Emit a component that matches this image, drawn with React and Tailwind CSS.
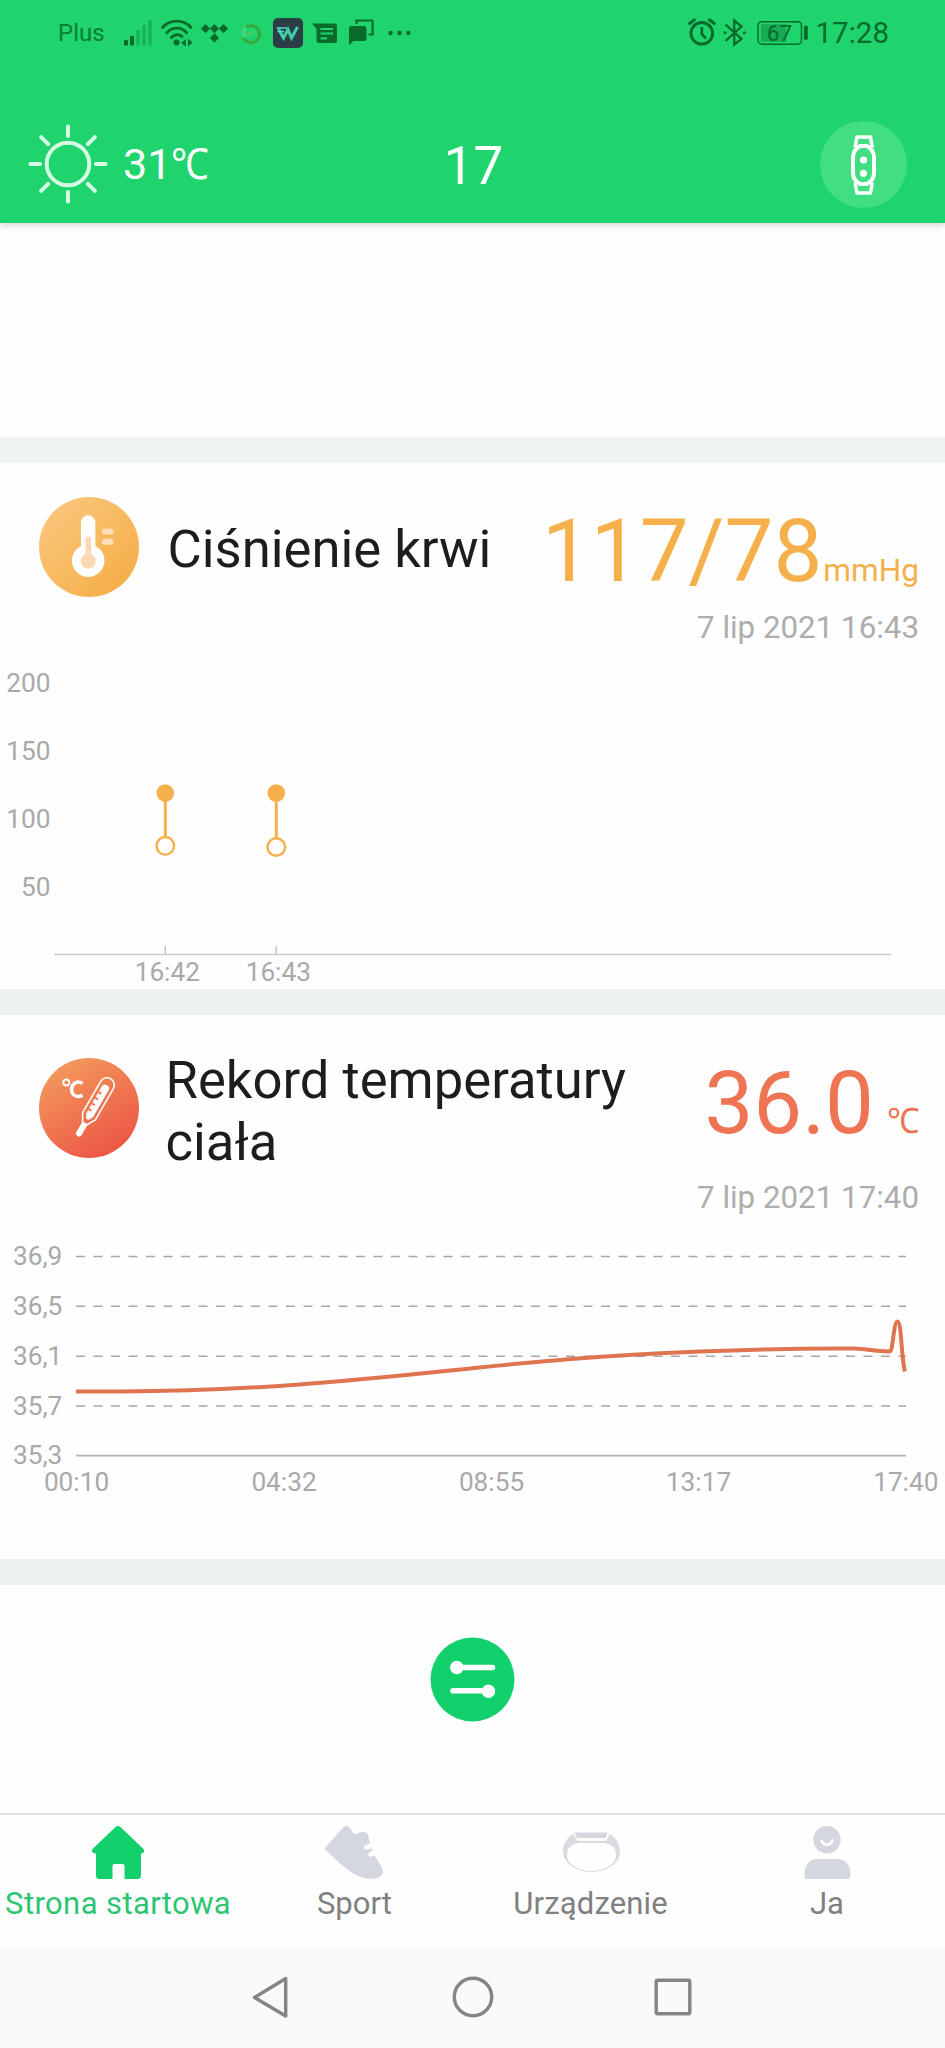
import React from "react";

const ORANGE = "#f5b04c";
const DARK = "#0a6a2c";

function StatusIcons() {
  return (
    <svg width="296" height="34" viewBox="120 16 296 34" fill={DARK}>
      <rect x="124" y="40" width="4" height="5.5" rx="1" />
      <rect x="130" y="36" width="4" height="9.5" rx="1" />
      <g fillOpacity="0.32">
        <rect x="136.300" y="30" width="3.400" height="15.500" rx="1" />
        <rect x="142.300" y="25" width="3.400" height="20.500" rx="1" />
        <rect x="148.300" y="20" width="3.400" height="25.500" rx="1" />
      </g>
      <g fill="none" stroke={DARK} strokeWidth="2.800" strokeLinecap="round">
        <path d="M162.500 27.500C170 19 183.500 19 191 27.500" />
        <path d="M166.800 32.800C172 26.500 181.500 26.500 186.800 32.800" />
        <path d="M171.200 37.500C174.500 34 179 34 182 36.500" />
      </g>
      <circle cx="176.500" cy="42.600" r="3" />
      <path d="M181 43L186 39V46.500zM192.500 42.500L188 38.500V46.500z" />
      <path d="M205.500 24l4.600 4.600-4.600 4.600-4.600-4.600zM214.500 24l4.600 4.600-4.600 4.600-4.600-4.600zM223.500 24l4.600 4.600-4.600 4.600-4.600-4.600zM214.500 33.300l4.600 4.600-4.600 4.600-4.600-4.600z" />
      <g fill="none" strokeLinecap="round">
        <path d="M247.500 26.500A8.500 8.500 0 1 1 243.500 38" stroke="#35ab3c" strokeWidth="3.200" />
        <path d="M244.500 36.500A9 9 0 0 1 245 28" stroke="#4fd487" strokeWidth="3" />
        <path d="M247 34.500L253 32" stroke="#63c95a" strokeWidth="2" />
      </g>
      <rect x="273" y="18" width="30" height="30" rx="5" fill="#2d3d46" />
      <g fill="none" stroke="#3fd0a4" strokeWidth="3">
        <path d="M278.500 29L283.500 38L288 29.500L291.500 38L297.500 27" />
        <path d="M276.500 28H287M277.500 31.500H284" strokeWidth="1.600" stroke="#51d6d0" />
      </g>
      <path d="M312 23.500H334.500Q337 23.500 337 26V40.500Q337 43 334.500 43H319Q316.500 43 316.500 40.500V29z" />
      <path d="M320.500 29H333M320.500 33.500H333M320.500 38.300H327" stroke="#1fd46d" strokeWidth="2.200" />
      <path d="M351 26H364Q366.500 26 366.500 28.500V38.500Q366.500 41 364 41H353.500L349 45V28.500Q349 26 351 26z" />
      <path d="M356.500 24V20.500H371.500Q372.600 20.500 372.600 21.600V34.500H368.500" fill="none" stroke={DARK} strokeWidth="2.200" />
      <circle cx="390.500" cy="33" r="2.200" />
      <circle cx="399.500" cy="33" r="2.200" />
      <circle cx="408.300" cy="33" r="2.200" />
    </svg>
  );
}

function SystemIcons() {
  return (
    <svg width="122" height="34" viewBox="686 16 122 34" fill="none" stroke={DARK}>
      <circle cx="700.800" cy="33.300" r="10.800" strokeWidth="3" />
      <path d="M700.800 27V34L705 38.500" strokeWidth="2.600" />
      <path d="M688.500 23.500L693.500 19.800M713.300 23.500L708.300 19.800" strokeWidth="3" strokeLinecap="round" />
      <path d="M724.500 24.500L740.500 39L733.300 44.500V20.500L740.500 26.500L724.500 41" strokeWidth="2.300" />
      <circle cx="724" cy="32.700" r="1.500" fill={DARK} stroke="none" />
      <circle cx="743.300" cy="32.700" r="1.500" fill={DARK} stroke="none" />
      <rect x="757" y="21.700" width="43.500" height="22.500" rx="4" strokeWidth="1.500" />
      <rect x="760" y="24.300" width="25" height="17.400" fill={DARK} fillOpacity="0.38" stroke="none" />
      <rect x="803" y="25.500" width="3.800" height="14.500" rx="1.800" fill={DARK} stroke="none" />
      <text x="778.500" y="40.600" textAnchor="middle" fontSize="22.500" fill={DARK} stroke="none">67</text>
    </svg>
  );
}

function Sun() {
  const rays = [0, 45, 90, 135, 180, 225, 270, 315];
  return (
    <svg width="80" height="80" viewBox="-40 -40 80 80" stroke="#d6fbe3" strokeWidth="4" fill="none" strokeLinecap="round">
      <circle r="21.300" />
      {rays.map((a) => (
        <path key={a} d={a % 90 ? "M0 -28V-38" : "M0 -28V-37.500"} transform={`rotate(${a})`} />
      ))}
    </svg>
  );
}

function Band() {
  return (
    <svg width="87" height="87" viewBox="-43.500 -43.500 87 87" fill="none" stroke="#fff">
      <circle r="43.500" fill="#42de82" stroke="none" />
      <path d="M-8.500 -17L-6.500 -27.500H7L8.800 -17M-8.500 18L-6.500 28.500H7L8.800 18" strokeWidth="3.500" strokeLinejoin="round" />
      <path d="M-3.500 -18.500H3.500Q10.500 -14.500 10.500 -7V8Q10.500 16 3.500 19.500H-3.500Q-10.500 16 -10.500 8V-7Q-10.500 -14.500 -3.500 -18.500z" strokeWidth="4" />
      <circle cx="0" cy="-4.500" r="3.600" fill="#fff" stroke="none" />
      <circle cx="0" cy="8.800" r="3.600" fill="#fff" stroke="none" />
    </svg>
  );
}

function PressureIcon() {
  return (
    <svg className="mt-[34.5px] shrink-0" width="100" height="100" viewBox="0 0 100 100">
      <defs>
        <linearGradient id="amber" x1="0" y1="0" x2="1" y2="1">
          <stop offset="0.100" stopColor="#fac67b" />
          <stop offset="0.900" stopColor="#f5ae48" />
        </linearGradient>
      </defs>
      <circle cx="50" cy="50" r="50" fill="url(#amber)" />
      <path d="M42 49V25.500a7.200 7.200 0 0 1 14.400 0V49a16.300 16.300 0 1 1-14.400 0z" fill="#fff" />
      <path d="M46.500 57V42.500a2.800 2.800 0 0 1 5.600 0V57a7.600 7.600 0 1 1-5.600 0z" fill="#fbd9b4" />
      <rect x="63" y="31.500" width="11.500" height="6" rx="3" fill="#fde0b8" />
      <rect x="63" y="41.700" width="11.500" height="6" rx="3" fill="#fde0b8" />
    </svg>
  );
}

function BodyTempIcon() {
  return (
    <svg className="mt-[42.5px] shrink-0" width="100" height="100" viewBox="0 0 100 100">
      <defs>
        <linearGradient id="coral" x1="0.200" y1="0" x2="0.800" y2="1">
          <stop offset="0.050" stopColor="#f3985c" />
          <stop offset="0.950" stopColor="#ec5545" />
        </linearGradient>
      </defs>
      <circle cx="50" cy="50" r="50" fill="url(#coral)" />
      <g fill="none" stroke="#fff">
        <circle cx="27.300" cy="24.500" r="3" strokeWidth="1.800" />
        <path d="M43.500 25.500C39 22 32.500 25.500 32.500 31C32.500 37.500 38.500 40.500 43.500 37" strokeWidth="3.400" />
      </g>
      <g transform="translate(68 27) rotate(30)">
        <path d="M-7.300 0a7.300 7.300 0 0 1 14.600 0V36L2.500 44.500H-2.500L-7.300 36z" fill="none" stroke="#fff" strokeWidth="1.600" />
        <path d="M-3.800 4a3.900 3.900 0 0 1 7.800 0V35L1.500 39.500H-1.500L-3.800 35V31H-0.500V29H-3.800V24.500H-0.500V22.500H-3.800V18H-0.500V16H-3.800V11.500H-0.500V9.500H-3.800z" fill="#fff" />
        <path d="M-3 45H3V56a3 3 0 0 1-6 0z" fill="#fff" />
      </g>
    </svg>
  );
}

function PressureChart() {
  const levels = [[200, 691.7], [150, 760], [100, 828], [50, 896]];
  const readings = [
    { x: 165.300, low: 845.800, label: "16:42" },
    { x: 276.300, low: 847, label: "16:43" },
  ];
  return (
    <svg className="block" width="945" height="336" viewBox="0 653 945 336" fontSize="26.200" fill="#a9a9a9">
      {levels.map(([v, y]) => (
        <text key={v} x="50.500" y={y} textAnchor="end">{v}</text>
      ))}
      <path d="M54 954.500H891.500" stroke="#cbcbcb" strokeWidth="1.600" />
      {readings.map((r) => (
        <g key={r.label}>
          <path d={`M${r.x} 946V954`} stroke="#c4c4c4" strokeWidth="1.500" />
          <path d={`M${r.x} 793V${r.low - 9}`} stroke={ORANGE} strokeWidth="3" />
          <circle cx={r.x} cy="793" r="8.800" fill={ORANGE} />
          <circle cx={r.x} cy={r.low} r="8.800" fill="#fff" stroke={ORANGE} strokeWidth="2.400" />
          <text x={r.x + 2} y="981.300" textAnchor="middle">{r.label}</text>
        </g>
      ))}
    </svg>
  );
}

function TemperatureChart() {
  const levels = [["36,9", 1256.4], ["36,5", 1306.3], ["36,1", 1356.2], ["35,7", 1406]];
  const hours = [["00:10", 76.5], ["04:32", 284], ["08:55", 491.5], ["13:17", 698.5], ["17:40", 905.8]];
  return (
    <svg className="block" width="945" height="334" viewBox="0 1225 945 334" fontSize="26.200" fill="#a9a9a9">
      {levels.map(([v, y]) => (
        <g key={v}>
          <text x="13" y={y + 8.500}>{v}</text>
          <path d={`M76 ${y}H906`} stroke="#a8a8a8" strokeWidth="1.500" strokeDasharray="9 8.500" />
        </g>
      ))}
      <text x="13" y="1464">35,3</text>
      <path d="M76 1455.700H906" stroke="#b0b0b0" strokeWidth="1.800" />
      {hours.map(([h, x]) => (
        <text key={h} x={x} y="1491.300" textAnchor="middle">{h}</text>
      ))}
      <path
        d="M76 1391.500H120C250 1391 350 1381 450 1370.500C540 1361 600 1355.500 700 1351.500C760 1349 820 1348.300 855 1348.500C867 1349 874 1351.500 890 1351.500C893 1351.500 893.500 1321.500 897.500 1321.500C901.500 1321.500 901.500 1361 905 1371.500"
        fill="none"
        stroke="#e07450"
        strokeWidth="4"
        strokeLinejoin="round"
      />
    </svg>
  );
}

function Card({ icon, title, titleClass, value, unit, tone, date, dateClass, headClass, children }) {
  return (
    <section>
      <div className={`flex pl-[39px] pr-[26px] ${headClass}`}>
        {icon}
        <h2 className={`text-[52.6px] leading-[62px] text-[#1d1d1f] whitespace-nowrap ${titleClass}`}>{title}</h2>
        <div className="ml-auto flex flex-col items-end pt-[38px]">
          <div className={`flex items-baseline text-[87px] leading-[100px] ${tone}`}>
            {value}
            {unit}
          </div>
          <time className={`text-[31.3px] leading-[40px] text-[#adadad] ${dateClass}`}>{date}</time>
        </div>
      </div>
      {children}
    </section>
  );
}

function Tab({ label, tone, children }) {
  return (
    <div className={`flex flex-col items-center ${tone}`}>
      <svg className="mt-[11px]" width="60" height="56" viewBox="-30 0 60 56" fill="currentColor">{children}</svg>
      <span className="mt-[2px] text-[31px] leading-[40px] whitespace-nowrap">{label}</span>
    </div>
  );
}

export default function App() {
  return (
    <div className="flex h-[2048px] w-[945px] flex-col overflow-hidden bg-[#fefefe] font-[Roboto,sans-serif]">
      <header className="h-[223px] shrink-0 bg-[#1fd46d] shadow-[0_2px_7px_rgba(0,0,0,0.18)]">
        <div className="flex h-[66px] items-center pl-[58px] pr-[56px] text-[#0d7c36]">
          <span className="w-[62px] text-[24px] leading-[34px]">Plus</span>
          <StatusIcons />
          <div className="ml-auto flex items-center">
            <SystemIcons />
            <span className="ml-[7px] text-[29.5px] leading-[34px] text-[#0a6a2c]">17:28</span>
          </div>
        </div>
        <div className="grid h-[144px] grid-cols-3 items-center pt-[54px] pl-[28px] pr-[38px]">
          <div className="-mt-[2px] flex items-center">
            <Sun />
            <span className="ml-[15px] text-[43px] leading-[50px] text-white">31<span className="inline-block origin-left scale-x-[0.88]">℃</span></span>
          </div>
          <div className="pl-[12px] pt-[2px] text-center text-[53px] leading-[64px] text-white">17</div>
          <div className="-mt-[2px] flex justify-end"><Band /></div>
        </div>
      </header>

      <main className="shrink-0">
        <div className="h-[213.5px]" />
        <div className="h-[26px] bg-[#eef2f3]" />
        <Card
          icon={<PressureIcon />}
          title="Ciśnienie krwi"
          titleClass="ml-[28.5px] mt-[55px]"
          value="117/78"
          unit={<span className="ml-[1px] text-[31.6px] leading-none">mmHg</span>}
          tone="text-[#f5b04c]"
          date="7 lip 2021 16:43"
          dateClass="mt-[7px]"
          headClass="h-[190.5px]"
        >
          <PressureChart />
        </Card>
        <div className="h-[26px] bg-[#eef1f2]" />
        <Card
          icon={<BodyTempIcon />}
          title={<>Rekord temperatury<br />ciała</>}
          titleClass="ml-[26.5px] mt-[33.5px]"
          value="36.0"
          unit={<span className="-mr-[1px] ml-[11px] inline-block origin-right scale-x-[0.93] text-[35px] leading-none">℃</span>}
          tone="text-[#ee7453]"
          date="7 lip 2021 17:40"
          dateClass="mt-[25px]"
          headClass="h-[210px]"
        >
          <TemperatureChart />
        </Card>
        <div className="h-[26px] bg-[#eef1f2]" />
        <div className="flex h-[228px] justify-center pt-[52px]">
          <svg width="85" height="85" viewBox="-42.500 -42.500 85 85">
            <circle r="42" fill="#12d16c" />
            <g stroke="#fff" strokeWidth="5.600" strokeLinecap="round" fill="#fff">
              <path d="M-15 -12H20M-19.500 11.200H15" />
              <circle cx="-15.700" cy="-12" r="6.700" stroke="none" />
              <circle cx="15.900" cy="11.800" r="6.700" stroke="none" />
            </g>
          </svg>
        </div>
      </main>

      <nav className="grid h-[133px] shrink-0 grid-cols-4 border-t-2 border-[#e0e0e0]">
        <Tab label={<span className="tracking-[0.4px]">Strona startowa</span>} tone="text-[#2cc572]">
          <path fill="#12d16c" d="M-2.500 1Q0 -1 2.500 1L25.500 23Q27.500 26 24 27.500H23V49.500Q23 53 19.500 53H6.500V40Q6.500 38 4.500 38H-3.500Q-5.500 38 -5.500 40V53H-18.500Q-22 53 -22 49.500V27.500H-23.500Q-27.500 26 -25.500 23z" />
        </Tab>
        <Tab label="Sport" tone="text-[#808080]">
          <path fill="#d4d7df" d="M-28.500 21.500Q-29.500 23 -28 24.500L-11 40Q4 53 18 53Q29 52 29 45.500Q28.500 41 20.500 29.500L17 30.700Q14.800 31 14 28.500Q14 26.500 18.500 25V22.500L13 23.500Q10.500 23.700 10 21.500Q9.500 19.500 12.500 18.500L16 17.800L14 9Q12.500 5.500 8.500 5.800Q5.500 6 2.500 8Q-0.500 8.500 -1.800 6L-4 2Q-7 -1.500 -11 1.500z" />
        </Tab>
        <Tab label={<span className="tracking-[0.15px]">Urządzenie</span>} tone="text-[#808080]">
          <g transform="translate(0.500 0)">
            <path fill="#d8dbe1" fillRule="evenodd" d="M-18 8C-25 12 -28.500 18 -28.500 25C-28.500 37 -16 46 0 46C16 46 28.500 37 28.500 25C28.500 18 24 11 18 8L16 12.500Q15 15 12 15H-12Q-15 15 -16 12.500zM-13 17H13C20 18 24.500 22 24.500 29C24.500 38.500 13 45 0 45C-13 45 -24.500 38.500 -24.500 29C-24.500 22 -20 18 -13 17z" />
            <path fill="#d4d7df" d="M-17 6.500H16L14.500 11Q14 12 12.500 12H-13Q-14.500 12 -15 11z" />
          </g>
        </Tab>
        <Tab label="Ja" tone="text-[#808080]">
          <circle cy="13.700" r="13.700" fill="#d4d7df" />
          <path d="M-5.500 14.500C-3.500 20 3.500 20 5.500 14.500" fill="none" stroke="#fff" strokeWidth="2.600" strokeLinecap="round" />
          <path fill="#d4d7df" d="M-22.500 52V48C-22.500 39 -17 33 -10 33H10C18 33 23.500 39 23.500 47V50Q23.500 53 20.500 53H-20Q-22.500 53 -22.500 52z" />
        </Tab>
      </nav>

      <footer className="flex h-[102px] grow items-center bg-[#fafafa] pl-[250px]">
        <svg width="40" height="44" viewBox="250 1974 40 44" fill="none" stroke="#858585" strokeWidth="3.400" strokeLinejoin="round">
          <path d="M285.700 1977.500V2015L254.500 1996.500z" />
        </svg>
        <svg className="ml-[161px]" width="44" height="44" viewBox="-22 -22 44 44" fill="none" stroke="#858585" strokeWidth="3.400">
          <circle r="18.700" />
        </svg>
        <svg className="ml-[156px]" width="44" height="44" viewBox="-22 -22 44 44" fill="none" stroke="#858585" strokeWidth="3.400">
          <rect x="-16.800" y="-16.800" width="33.600" height="33.600" rx="1.500" />
        </svg>
      </footer>
    </div>
  );
}
